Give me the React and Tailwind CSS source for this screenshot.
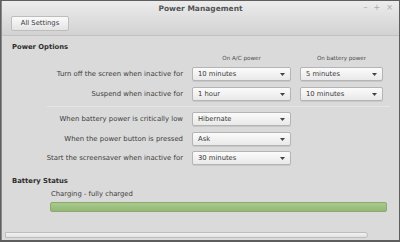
import React from "react";

const font = { fontFamily: '"DejaVu Sans", "Liberation Sans", sans-serif' };

function Combo({ value, width }) {
  return (
    <div
      className={`${width} h-[14px] flex items-center justify-between pl-[5px] pr-[5px] rounded-[2px] border border-[#b4b4b4] bg-gradient-to-b from-[#fbfbfb] to-[#e9e9e9] shadow-[0_1px_0_rgba(0,0,0,0.08)] text-[6.8px] text-[#3a3a3a]`}
    >
      <span>{value}</span>
      <svg width="5" height="3" viewBox="0 0 5 3">
        <path d="M0 0 L5 0 L2.5 3 Z" fill="#444" />
      </svg>
    </div>
  );
}

function Row({ label, ac, battery, className = "" }) {
  return (
    <div className={`grid grid-cols-[181px_99px_83px] gap-x-[9px] items-center ${className}`}>
      <div className="text-right text-[6.9px] text-[#3c3c3c] leading-[9px]">{label}</div>
      <Combo value={ac} width="w-[99px]" />
      {battery ? <Combo value={battery} width="w-[83px]" /> : <div />}
    </div>
  );
}

export default function App() {
  return (
    <div
      className="w-[400px] h-[242px] bg-[#5e5e5e] p-[1px] pb-[2px] overflow-hidden"
      style={font}
    >
      <div className="w-full h-full flex flex-col bg-[#dadada] border-l border-[#8a8a8a]">
        {/* title + toolbar */}
        <div className="h-[35px] bg-gradient-to-b from-[#ececec] to-[#d2d2d2] border-b border-[#c2c2c2] relative">
          <div className="h-[15px] flex items-center justify-center text-[7.5px] font-bold text-[#555]">
            Power Management
          </div>
          <div className="absolute right-[6px] top-[3px] flex items-center gap-[6px] text-[#a9a9a9] text-[8px] leading-none">
            <span>–</span>
            <span>+</span>
            <span>×</span>
          </div>
          <div className="pl-[9px]">
            <button className="w-[58px] h-[15px] rounded-[2px] border border-[#bdbdbd] bg-gradient-to-b from-[#fafafa] to-[#e4e4e4] text-[6.8px] text-[#3a3a3a] flex items-center justify-center">
              All Settings
            </button>
          </div>
        </div>

        {/* content */}
        <div className="flex-1 flex flex-col">
          <div className="pl-[10px] mt-[7px] text-[6.8px] font-bold text-[#2e2e2e] leading-[8px]">
            Power Options
          </div>
          <div className="grid grid-cols-[181px_99px_83px] gap-x-[9px] mt-[4px] text-[5.6px] text-[#4a4a4a] leading-[7px]">
            <div />
            <div className="text-center">On A/C power</div>
            <div className="text-center">On battery power</div>
          </div>
          <Row className="mt-[5px]" label="Turn off the screen when inactive for" ac="10 minutes" battery="5 minutes" />
          <Row className="mt-[6px]" label="Suspend when inactive for" ac="1 hour" battery="10 minutes" />
          <div className="ml-[45px] mr-[9px] mt-[5px] h-px bg-[#c8c8c8] border-b border-[#e6e6e6]" />
          <Row className="mt-[5px]" label="When battery power is critically low" ac="Hibernate" />
          <Row className="mt-[6px]" label="When the power button is pressed" ac="Ask" />
          <Row className="mt-[5px]" label="Start the screensaver when inactive for" ac="30 minutes" />

          <div className="pl-[10px] mt-[12px] text-[6.8px] font-bold text-[#2e2e2e] leading-[8px]">
            Battery Status
          </div>
          <div className="pl-[49px] mt-[5px] text-[6.8px] text-[#3c3c3c] leading-[8px]">
            Charging - fully charged
          </div>
          <div className="ml-[48px] mr-[12px] mt-[4px] h-[10px] rounded-[2px] border border-[#8aa872] bg-gradient-to-b from-[#a8ca8a] to-[#94b878]" />

          <div className="flex-1" />
          <div className="ml-[3px] mr-[31px] mb-[2px] h-[6px] rounded-r-[3px] border border-[#bdbdbd] bg-gradient-to-b from-[#f2f2f2] to-[#e2e2e2]" />
        </div>
      </div>
    </div>
  );
}
